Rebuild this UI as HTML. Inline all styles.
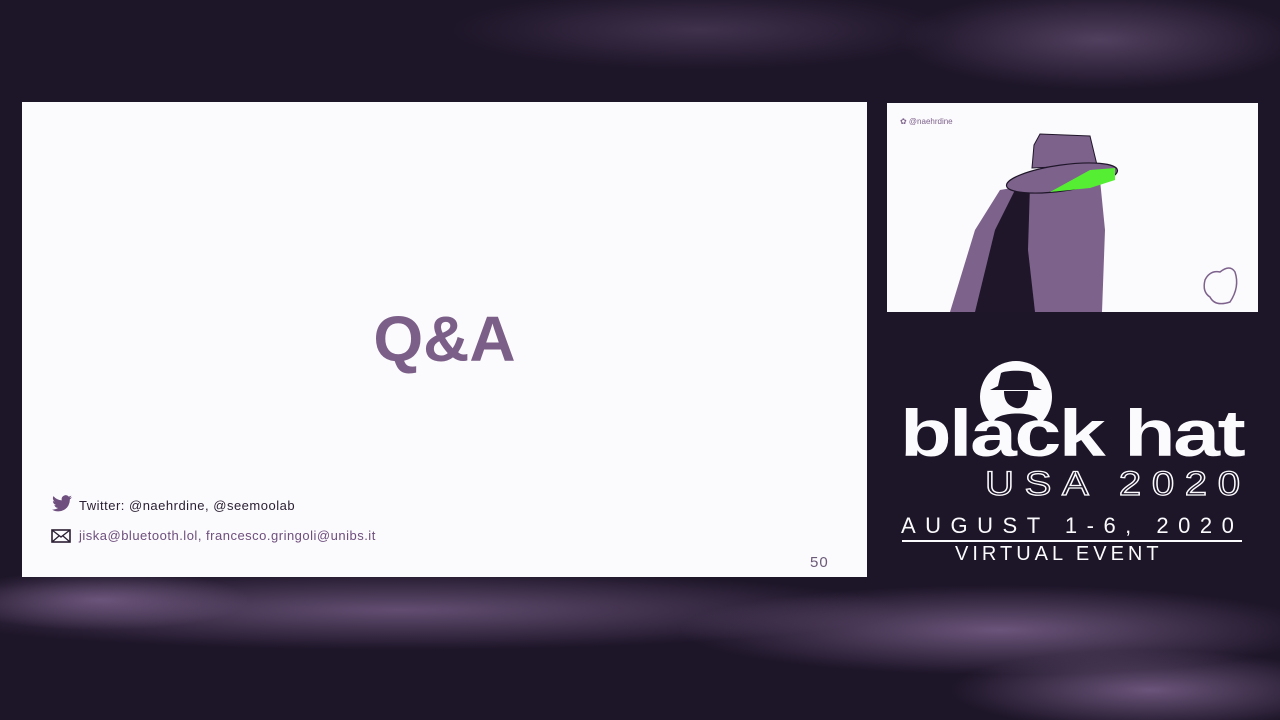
<!DOCTYPE html>
<html><head><meta charset="utf-8"><style>
*{margin:0;padding:0}
body{width:1280px;height:720px;overflow:hidden;background:#1d1528;position:relative;font-family:"Liberation Sans",sans-serif}
.slide{position:absolute;left:22px;top:102px;width:845px;height:475px;background:#fbfafc}
.qa{position:absolute;left:0;width:845px;top:200px;text-align:center;font-size:64px;font-weight:bold;color:#7b5f88}
.t{position:absolute;font-size:13px;letter-spacing:.5px}
.pg{position:absolute;left:788px;top:452px;font-size:15px;color:#6b5a78;letter-spacing:1px}
.logo{position:absolute;color:#fbfafc;white-space:nowrap}
</style></head><body>
<svg width="1280" height="720" style="position:absolute;left:0;top:0">
<defs><radialGradient id="g" cx="50%" cy="50%" r="50%"><stop offset="0" stop-color="#8a6d9a" stop-opacity=".8"/><stop offset="1" stop-color="#8a6d9a" stop-opacity="0"/></radialGradient></defs>
<ellipse cx="1100" cy="40" rx="200" ry="50" fill="url(#g)" opacity=".6"/>
<ellipse cx="700" cy="30" rx="250" ry="40" fill="url(#g)" opacity=".4"/>
<ellipse cx="400" cy="610" rx="500" ry="40" fill="url(#g)" opacity=".8"/>
<ellipse cx="1000" cy="630" rx="320" ry="45" fill="url(#g)" opacity=".9"/>
<ellipse cx="1150" cy="690" rx="200" ry="40" fill="url(#g)" opacity=".9"/>
<ellipse cx="100" cy="600" rx="150" ry="30" fill="url(#g)" opacity=".8"/>
</svg>
<div class="slide">
<div class="qa">Q&amp;A</div>
<svg style="position:absolute;left:29px;top:393px" width="22" height="18" viewBox="0 0 24 20"><path d="M23 2.5c-.8.4-1.7.6-2.6.7.9-.6 1.6-1.4 2-2.5-.9.5-1.900.9-2.9 1.1A4.5 4.5 0 0 0 11.8 6 12.8 12.8 0 0 1 2.5 1.3a4.5 4.5 0 0 0 1.4 6c-.7 0-1.4-.2-2-.6 0 2.2 1.6 4 3.6 4.4-.7.2-1.4.2-2 .1.6 1.8 2.2 3.1 4.2 3.1A9 9 0 0 1 1 16.2a12.8 12.8 0 0 0 19.7-11.3c.9-.6 1.6-1.4 2.3-2.4z" fill="#6e4f7e"/></svg>
<div class="t" style="left:57px;top:396px;color:#2a1f33">Twitter: @naehrdine, @seemoolab</div>
<svg style="position:absolute;left:29px;top:427px" width="20" height="14"><rect x="1" y="1" width="18" height="12" fill="none" stroke="#2a1f33" stroke-width="1.6"/><path d="M1 1l9 7 9-7M1 13l7-6M19 13l-7-6" fill="none" stroke="#2a1f33" stroke-width="1.3"/></svg>
<div class="t" style="left:57px;top:426px;color:#6e4f7e">jiska@bluetooth.lol, francesco.gringoli@unibs.it</div>
<div class="pg">50</div>
</div>
<svg style="position:absolute;left:887px;top:103px" width="371" height="209" viewBox="887 103 371 209">
<rect x="887" y="103" width="371" height="209" fill="#fbfafc"/>
<path d="M950 312 L975 230 L1000 190 L1030 185 L1040 312Z" fill="#7d628c"/>
<path d="M975 312 L995 230 L1015 190 L1035 190 L1040 312Z" fill="#1f1629"/>
<path d="M1030 185 L1100 180 L1105 230 L1102 312 L1035 312 L1028 250Z" fill="#7d628c"/>
<path d="M1034 145 L1040 134 L1090 136 L1097 165 L1032 168Z" fill="#7d628c" stroke="#1f1629" stroke-width="1"/>
<ellipse cx="1062" cy="178" rx="56" ry="13" fill="#7d628c" stroke="#1f1629" stroke-width="1.2" transform="rotate(-8 1062 178)"/>
<path d="M1050 192 L1090 170 L1115 168 L1115 180 L1090 188Z" fill="#55ee33"/>
<text x="900" y="124" font-size="8" fill="#7d628c" font-family="Liberation Sans">✿ @naehrdine</text>
<path d="M1205 280 q5-10 15-8 q10-8 15 0 q5 15-5 30 q-15 5-20-5 q-8-5-5-17z" fill="none" stroke="#7d628c" stroke-width="1.5"/>
</svg>
<svg class="logo" style="left:978px;top:361px" width="76" height="60" viewBox="0 0 76 60"><circle cx="38" cy="36" r="36" fill="#fbfafc"/><path d="M12 29h52l-8-4-3-13c-5-3-25-3-30 0l-3 13z M26 30c0 10 4 15 12 17s12-7 12-17z M16 60c4-10 44-10 44 0z" fill="#1d1528"/></svg>
<div class="logo" style="left:900px;top:400px;font-size:66px;font-weight:bold;letter-spacing:-2px;line-height:66px;transform:scaleX(1.28);transform-origin:left top">black hat</div>
<div class="logo" style="left:985px;top:466px;font-size:34px;letter-spacing:9px;line-height:36px;color:transparent;-webkit-text-stroke:1.3px #fbfafc;transform:scaleX(1.18);transform-origin:left top">USA 2020</div>
<div class="logo" style="left:901px;top:514px;font-size:22px;letter-spacing:9.5px;line-height:24px">AUGUST 1-6, 2020</div>
<div style="position:absolute;left:902px;top:540px;width:340px;height:2px;background:#fbfafc"></div>
<div class="logo" style="left:955px;top:543px;font-size:20px;letter-spacing:4px;line-height:22px">VIRTUAL EVENT</div>
</body></html>
